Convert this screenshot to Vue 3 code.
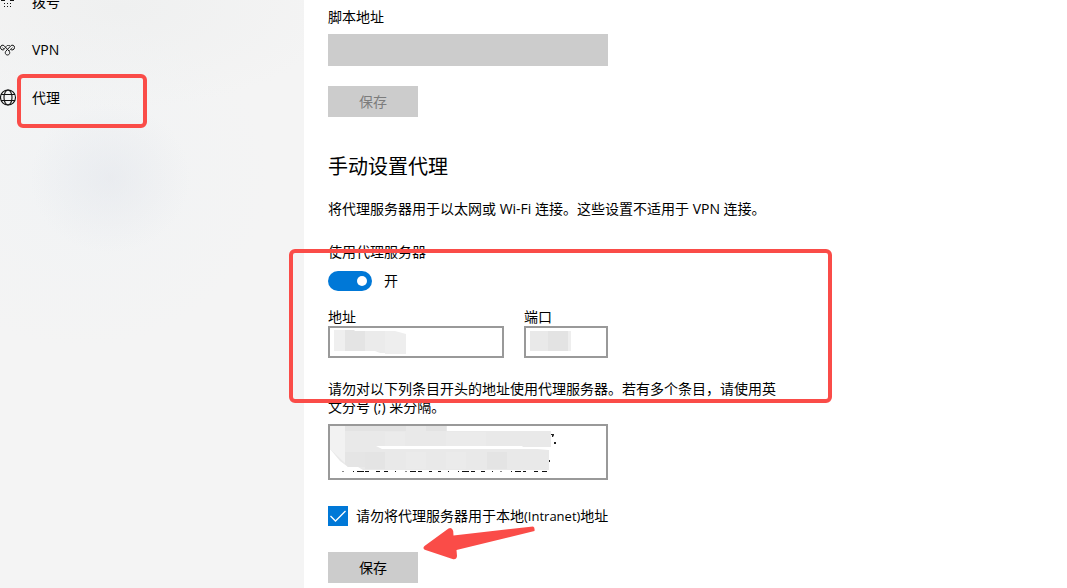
<script setup>
import { ref } from 'vue'

const scriptUrl = ref('')
const address = ref('')
const port = ref('')
const exceptions = ref('')
const useProxy = ref(true)
const skipLocal = ref(true)

// Visible lower edges of the covered last line, as [x, width] pairs
const remnants = [
  [14, 2], [25, 1], [29, 7], [37, 4], [48, 4], [56, 4], [67, 1], [77, 2], [82, 6], [90, 4],
  [101, 3], [110, 3], [120, 1], [130, 1], [134, 7], [143, 4], [153, 4], [164, 1], [172, 2],
  [183, 1], [187, 6], [195, 3], [206, 4], [214, 5]
]
</script>

<template>
  <div class="page">
    <nav class="sidebar" aria-label="网络和 Internet">
      <a class="item" href="#dial">
        <svg class="icon" viewBox="0 0 16 16" fill="#111" aria-hidden="true">
          <path d="M1 6h4v1H1zM10 6h4v1h-4zM0 3h1v3H0zM14 3h1v3h-1zM1 2h13v1H1z" />
          <path d="M4 9h1v1H4zM7 9h1v1H7zM10 9h1v1h-1zM4 12h1v1H4zM7 12h1v1H7zM10 12h1v1h-1z" />
        </svg>
        <span>拨号</span>
      </a>
      <a class="item" href="#vpn">
        <svg class="icon" viewBox="0 0 16 16" fill="none" stroke="#111" aria-hidden="true">
          <path d="M4.300 7.300C3.200 8.600.5 8 .5 5.500S3 2.600 4.200 3.800L9 9c1.500 1.500.5 4-1.500 4S4.500 10.500 6 9L10.800 3.800C12 2.600 14.500 3 14.500 5.500s-2.700 3.100-3.800 1.800" />
          <path d="M2.500 5.500l1.600 1.600L7 3.500h3M12.500 5.500l-3.300 3.300" stroke-width=".7" />
        </svg>
        <span>VPN</span>
      </a>
      <a class="item" href="#proxy" aria-current="page">
        <svg class="icon" viewBox="0 0 16 16" fill="none" stroke="#111" stroke-width="1.1" aria-hidden="true">
          <circle cx="8" cy="7.500" r="7.500" />
          <ellipse cx="8" cy="7.500" rx="4" ry="7.500" />
          <path d="M1 4.500h14M1 10.500h14" />
        </svg>
        <span>代理</span>
      </a>
    </nav>

    <main class="content">
      <label for="script-url">脚本地址</label>
      <input id="script-url" v-model="scriptUrl" class="field wide script" type="text" disabled>
      <button class="save first" type="button" disabled>保存</button>

      <h2>手动设置代理</h2>
      <p class="intro">将代理服务器用于以太网或 Wi-Fi 连接。这些设置不适用于 VPN 连接。</p>

      <label for="use-proxy">使用代理服务器</label>
      <div class="switch-row">
        <input id="use-proxy" v-model="useProxy" class="switch" type="checkbox" role="switch">
        <span>{{ useProxy ? '开' : '关' }}</span>
      </div>

      <div class="pair">
        <div class="group address">
          <label for="address">地址</label>
          <div class="cover-box">
            <input id="address" v-model="address" class="field" type="text">
            <svg class="cover" width="84" height="32" aria-hidden="true">
              <path d="M6 4h20v21H6z" fill="#efefef" />
              <path d="M17 4h9l1 1h10v20H17z" fill="#e4e4e4" />
              <path d="M37 5h20v22h-5l-5-2H37z" fill="#ebebeb" />
              <path d="M57 5h10l11 3v20H57z" fill="#eee" />
            </svg>
          </div>
        </div>
        <div class="group port">
          <label for="port">端口</label>
          <div class="cover-box">
            <input id="port" v-model="port" class="field" type="text">
            <svg class="cover" width="60" height="32" aria-hidden="true">
              <path d="M6 5h18v20H6z" fill="#e9e9e9" />
              <path d="M24 5h20v20H24z" fill="#e3e3e3" />
              <path d="M44 5h3v20h-3z" fill="#eee" />
            </svg>
          </div>
        </div>
      </div>

      <label class="hint" for="exceptions">请勿对以下列条目开头的地址使用代理服务器。若有多个条目，请使用英文分号 (;) 来分隔。</label>
      <div class="cover-box wide">
        <textarea id="exceptions" v-model="exceptions" class="field area"></textarea>
        <svg class="cover" width="240" height="56" aria-hidden="true">
          <path d="M2 2h117v5h104v16h-28v2h14l12 1v20H35l-5-3H20L12 37 2 25z" fill="#e9e9e9" />
          <path d="M2 2h15v37L2 25z" fill="#f2f2f2" />
          <path d="M17 2h61v5H17zM98 2h20v5H98z" fill="#e3e3e3" />
          <path d="M17 28h20v15H20l-3-3z" fill="#e5e5e5" />
          <path d="M37 28h20v17H37zM159 28h20v17h-20z" fill="#e4e4e4" />
          <path d="M57 8h20v14H57zM118 8h40v14h-40zM78 28h20v17H78zM118 28h20v17h-20z" fill="#ebebeb" />
          <path d="M48 22h146l1 1h28v2H54z" fill="#fff" />
          <path d="M223 10h3v1l-1 2h-1v-2h-1zM226 18h2v2h-2zM221 36h1v2h-1z" fill="#222" />
          <rect v-for="[x, w] in remnants" :key="x" :x="x" y="47" :width="w" height="1" :fill="w === 2 ? '#888' : '#111'" />
        </svg>
      </div>

      <label class="check-row">
        <span class="check-box">
          <input v-model="skipLocal" type="checkbox">
          <svg v-if="skipLocal" viewBox="0 0 20 20" fill="none" stroke="#fff" stroke-width="1.3" aria-hidden="true">
            <path d="M2.500 10l5 5L17.500 5" />
          </svg>
        </span>
        <span>请勿将代理服务器用于本地<span class="latin">(Intranet)</span>地址</span>
      </label>
      <button class="save" type="button">保存</button>
    </main>

    <div class="mark nav-mark"></div>
    <div class="mark form-mark"></div>
    <svg class="arrow" viewBox="0 0 112 34" aria-hidden="true">
      <path d="M1.500 20L25.500 2.500Q29 1 30.200 5L30.500 9.500L110 .5Q112 1 111.500 5L33.500 24L34 30Q33.500 34 29.500 33L2.500 24Q-1 22.500 1.500 20Z" fill="#fa4c48" />
    </svg>
  </div>
</template>

<style>
body {
  margin: 0;
  background: #fff;
}
</style>

<style scoped>
.page {
  position: relative;
  display: flex;
  height: 100vh;
  overflow: hidden;
  font: 14px/18px "Open Sans", "Noto Sans CJK SC", sans-serif;
  color: #000;
}
.sidebar {
  box-sizing: border-box;
  flex: 0 0 304px;
  margin-top: -22px;
  background:
    radial-gradient(ellipse 80px 75px at 110px 200px, rgba(226, 229, 235, .5), transparent),
    radial-gradient(ellipse 190px 170px at 80px 200px, rgba(238, 242, 245, .5), transparent),
    radial-gradient(ellipse 220px 100px at 120px 30px, #eff0f0, transparent),
    #f4f4f4;
}
.item {
  display: flex;
  align-items: center;
  gap: 16px;
  height: 48px;
  color: inherit;
  text-decoration: none;
}
.icon {
  width: 16px;
  height: 16px;
  overflow: visible;
}
.content {
  flex: 1;
  display: flex;
  flex-direction: column;
  align-items: flex-start;
  padding: 8px 24px 0;
}
.field {
  box-sizing: border-box;
  display: block;
  width: 100%;
  height: 32px;
  margin: 0;
  padding: 4px 8px;
  border: 2px solid #999;
  border-radius: 0;
  background: #fff;
  font: inherit;
  outline: none;
}
.field:disabled {
  border-color: #ccc;
  background: #ccc;
}
.wide {
  width: 280px;
}
.script {
  margin-top: 8px;
}
.save {
  width: 90px;
  height: 31px;
  padding: 0;
  border: 0;
  background: #ccc;
  color: #000;
  font: inherit;
}
.save:disabled {
  color: #7c7c7c;
}
.first {
  margin-top: 20px;
}
h2 {
  margin: 36px 0 19px;
  font-size: 20px;
  line-height: 28px;
  font-weight: 400;
}
.intro {
  margin: 0 0 25px;
}
.switch-row {
  display: flex;
  align-items: center;
  gap: 12px;
  margin: 10px 0 17px;
  height: 20px;
}
.switch {
  display: flex;
  align-items: center;
  box-sizing: border-box;
  width: 44px;
  height: 20px;
  margin: 0;
  padding: 0 5px;
  border-radius: 10px;
  background: #999;
  appearance: none;
}
.switch::before {
  content: "";
  width: 10px;
  height: 10px;
  border-radius: 50%;
  background: #fff;
}
.switch:checked {
  justify-content: flex-end;
  background: #0078d7;
}
.pair {
  display: flex;
  gap: 20px;
}
.group {
  display: flex;
  flex-direction: column;
}
.address {
  width: 176px;
}
.port {
  width: 84px;
}
.cover-box {
  position: relative;
}
.cover {
  position: absolute;
  top: 0;
  left: 0;
  pointer-events: none;
}
.hint {
  max-width: 460px;
  margin: 22px 0 8px;
}
.area {
  height: 56px;
  resize: none;
}
.check-row {
  display: flex;
  align-items: center;
  gap: 8px;
  margin: 26px 0;
}
.check-box {
  position: relative;
  width: 20px;
  height: 20px;
}
.check-box input {
  display: block;
  box-sizing: border-box;
  width: 20px;
  height: 20px;
  margin: 0;
  border: 2px solid #333;
  appearance: none;
}
.check-box input:checked {
  border-color: #0078d7;
  background: #0078d7;
}
.check-box svg {
  position: absolute;
  inset: 0;
  pointer-events: none;
}
.latin {
  font-size: 13px;
}
.mark {
  position: absolute;
  box-sizing: border-box;
  border: 4px solid #fa4c48;
  border-radius: 6px;
  pointer-events: none;
}
.nav-mark {
  left: 17px;
  top: 74px;
  width: 130px;
  height: 54px;
}
.form-mark {
  left: 289px;
  top: 249px;
  width: 543px;
  height: 154px;
}
.arrow {
  position: absolute;
  left: 423px;
  top: 526px;
  width: 112px;
  height: 34px;
  pointer-events: none;
}
</style>
